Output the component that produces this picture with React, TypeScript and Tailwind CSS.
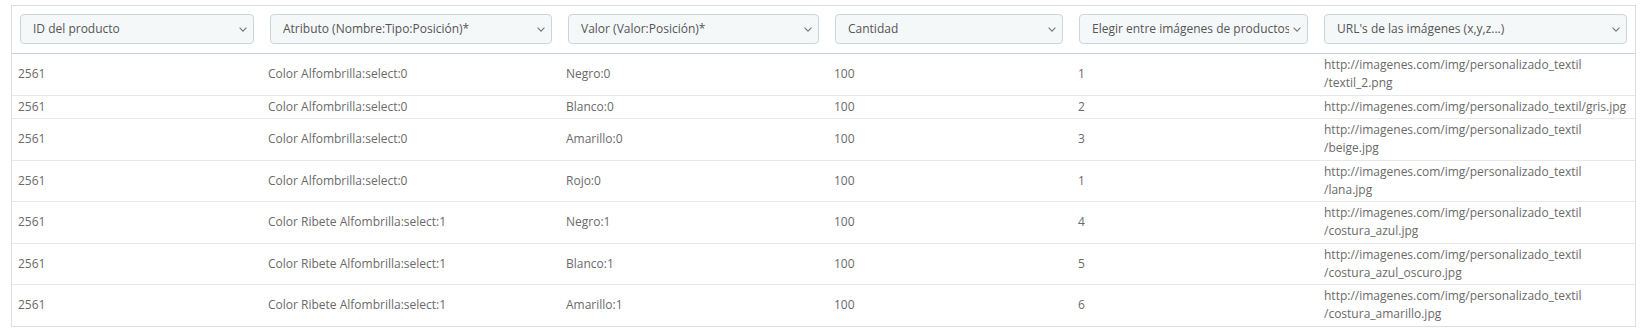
import React from "react";

const cols = "grid grid-cols-[250px_298px_267px_244px_245px_319px]";

const headers = [
  "ID del producto",
  "Atributo (Nombre:Tipo:Posición)*",
  "Valor (Valor:Posición)*",
  "Cantidad",
  "Elegir entre imágenes de productos",
  "URL's de las imágenes (x,y,z...)",
];

const base = "http://imagenes.com/img/personalizado_textil";

const rows: { a: string; v: string; q: string; i: string; url: string[] }[] = [
  { a: "Color Alfombrilla:select:0", v: "Negro:0", q: "100", i: "1", url: [base, "/textil_2.png"] },
  { a: "Color Alfombrilla:select:0", v: "Blanco:0", q: "100", i: "2", url: [base + "/gris.jpg"] },
  { a: "Color Alfombrilla:select:0", v: "Amarillo:0", q: "100", i: "3", url: [base, "/beige.jpg"] },
  { a: "Color Alfombrilla:select:0", v: "Rojo:0", q: "100", i: "1", url: [base, "/lana.jpg"] },
  { a: "Color Ribete Alfombrilla:select:1", v: "Negro:1", q: "100", i: "4", url: [base, "/costura_azul.jpg"] },
  { a: "Color Ribete Alfombrilla:select:1", v: "Blanco:1", q: "100", i: "5", url: [base, "/costura_azul_oscuro.jpg"] },
  { a: "Color Ribete Alfombrilla:select:1", v: "Amarillo:1", q: "100", i: "6", url: [base, "/costura_amarillo.jpg"] },
];

function Chevron() {
  return (
    <svg width="8" height="5" viewBox="0 0 8 5" className="shrink-0 ml-[4px]">
      <polyline points="0.6,0.6 4,4.2 7.4,0.6" fill="none" stroke="#777" strokeWidth="1.1" />
    </svg>
  );
}

function Select({ label }: { label: string }) {
  return (
    <div className="flex items-center h-[30px] rounded-[4px] border border-[#c9d6da] bg-[#f5f8f9] pl-3 pr-[6px] text-[12px] text-[#555]">
      <span className="flex-1 overflow-hidden whitespace-nowrap">{label}</span>
      <Chevron />
    </div>
  );
}

const pads = ["pl-[6px]", "pl-[6px]", "pl-[6px]", "pl-[7px]", "pl-[7px]", "pl-2"];

export default function App() {
  return (
    <div className="w-[1644px] h-[332px] bg-white pt-[5px] pl-[11px] pr-[8px] font-['Open_Sans',sans-serif]">
      <div className="border border-[#dadfe1]">
        <div className={`${cols} border-b border-[#c4d3d8]`}>
          {headers.map((h) => (
            <div key={h} className="px-2 pt-[8px] pb-[9px]">
              <Select label={h} />
            </div>
          ))}
        </div>
        {rows.map((r, idx) => {
          const cells = ["2561", r.a, r.v, r.q, r.i];
          return (
            <div
              key={idx}
              className={`${cols} items-center text-[12px] leading-[18px] text-[#6a6a6a] ${idx < rows.length - 1 ? "border-b border-[#e6e9ea]" : ""}`}
            >
              {cells.map((c, j) => (
                <div key={j} className={`${pads[j]} py-[2.25px] whitespace-nowrap`}>
                  {c}
                </div>
              ))}
              <div className={`${pads[5]} py-[2.25px] whitespace-nowrap`}>
                {r.url.map((u, k) => (
                  <div key={k}>{u}</div>
                ))}
              </div>
            </div>
          );
        })}
      </div>
    </div>
  );
}
